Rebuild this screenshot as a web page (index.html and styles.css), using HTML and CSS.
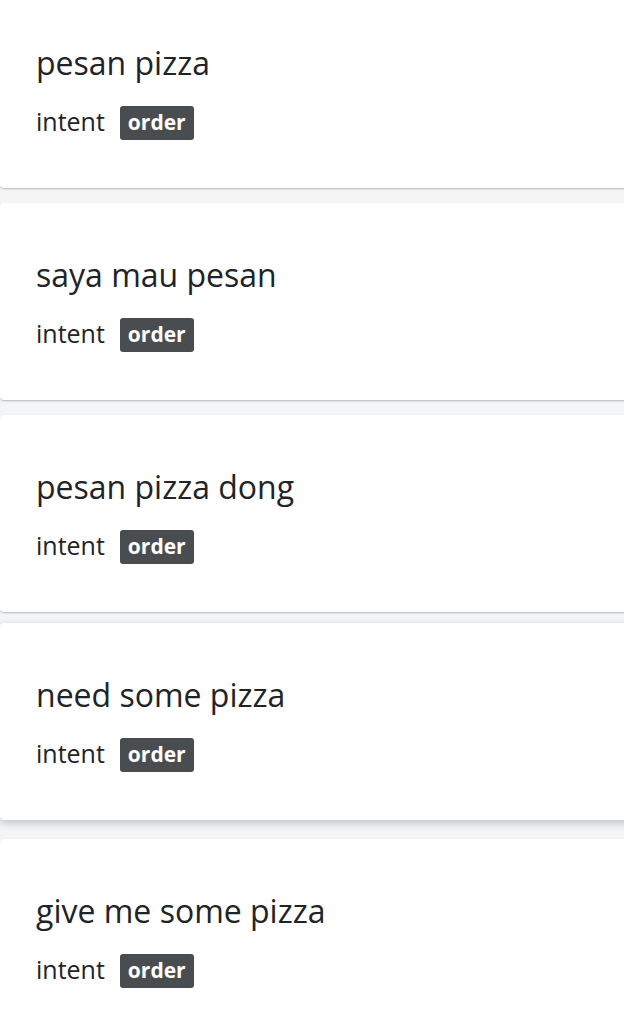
FILE: index.html
```html
<!DOCTYPE html>
<html>
<head>
<meta charset="utf-8">
<link rel="stylesheet" href="styles.css">
</head>
<body>
<div class="list">
  <div class="card">
    <div class="title">pesan pizza</div>
    <div class="meta"><span class="label">intent</span><span class="badge">order</span></div>
  </div>
  <div class="card">
    <div class="title">saya mau pesan</div>
    <div class="meta"><span class="label">intent</span><span class="badge">order</span></div>
  </div>
  <div class="card">
    <div class="title">pesan pizza dong</div>
    <div class="meta"><span class="label">intent</span><span class="badge">order</span></div>
  </div>
  <div class="card card-hover">
    <div class="title">need some pizza</div>
    <div class="meta"><span class="label">intent</span><span class="badge">order</span></div>
  </div>
  <div class="card">
    <div class="title">give me some pizza</div>
    <div class="meta"><span class="label">intent</span><span class="badge">order</span></div>
  </div>
</div>
</body>
</html>
```

FILE: styles.css
```css
html, body {
  margin: 0;
  padding: 0;
  background: #f4f5f7;
  overflow: hidden;
}
body {
  font-family: "Open Sans", "Noto Sans", sans-serif;
  color: #212326;
}
.list {
  display: flex;
  flex-direction: column;
  gap: 15px;
  margin-top: -9px;
  margin-right: -10px;
}
.card {
  background: #fff;
  border-radius: 4px;
  box-shadow: 0 1px 2px rgba(0,0,0,0.25);
  padding: 54px 36px 48px 36px;
  height: 197px;
  box-sizing: border-box;
}
.card-hover {
  transform: translateY(-4px);
  box-shadow: 0 3px 8px rgba(0,0,0,0.22);
}
.title {
  font-size: 32px;
  line-height: 36px;
  height: 36px;
  margin-bottom: 25px;
}
.meta {
  display: flex;
  align-items: center;
  height: 34px;
  gap: 15px;
}
.label {
  font-size: 25px;
  line-height: 30px;
  margin-top: -4px;
}
.badge {
  background: #4a4d50;
  color: #fff;
  font-weight: 700;
  font-size: 21px;
  border-radius: 3px;
  height: 34px;
  line-height: 32px;
  padding: 0 8px;
}
```
